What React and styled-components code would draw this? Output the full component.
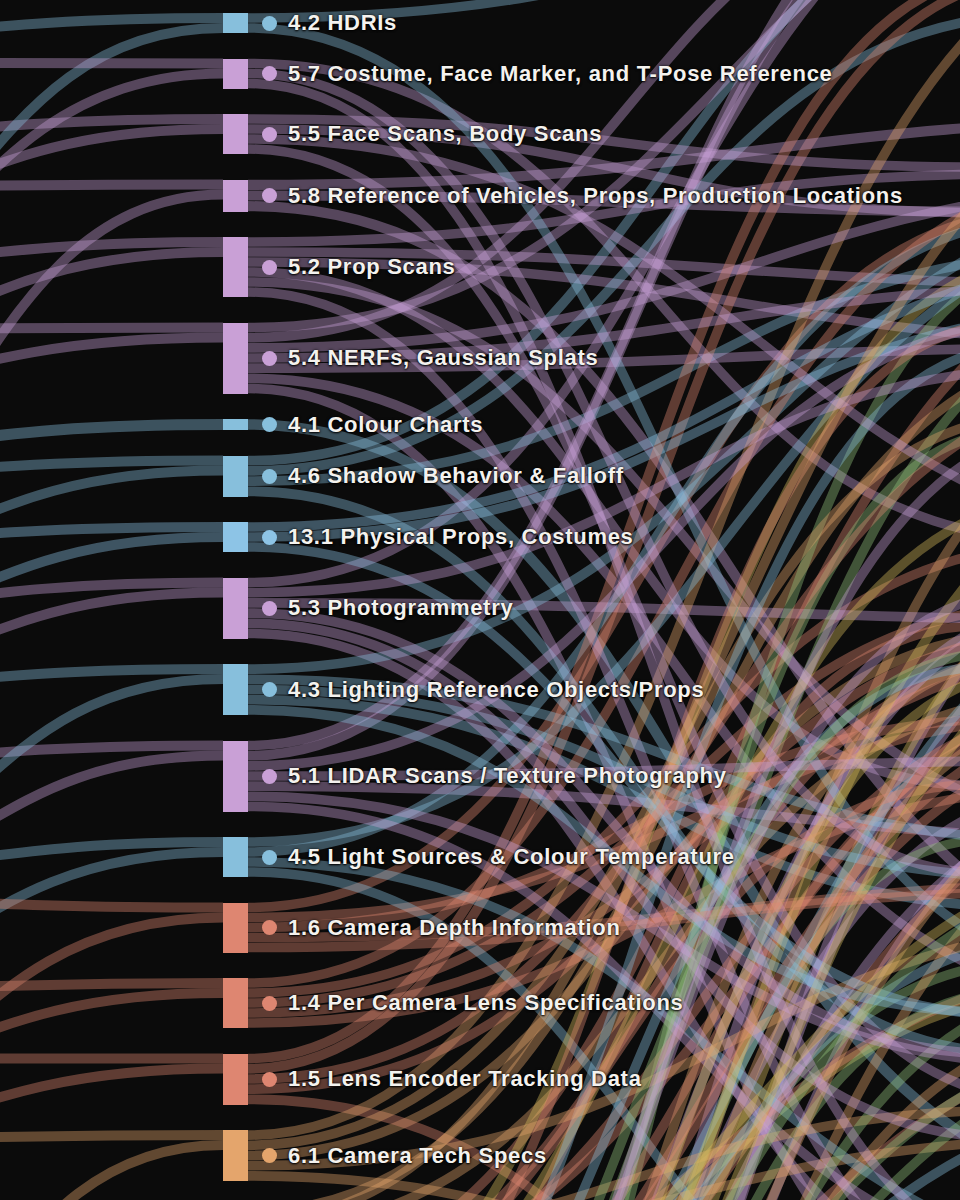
import React from "react";
import styled, { createGlobalStyle } from "styled-components";

const GlobalStyle = createGlobalStyle`
  html, body {
    margin: 0;
    padding: 0;
    background: #0b0b0b;
  }
`;

const BLUE = "#87bfdc";
const LIGHT_BLUE = "#8dc4e6";
const PURPLE = "#c9a0d6";
const SALMON = "#de8671";
const ORANGE = "#e4a56c";
const GREEN = "#93c47d";
const YELLOW = "#d8bb5c";

const NODES = [
  { label: "4.2 HDRIs", h: 20, color: BLUE },
  { label: "5.7 Costume, Face Marker, and T-Pose Reference", h: 30, color: PURPLE },
  { label: "5.5 Face Scans, Body Scans", h: 40, color: PURPLE },
  { label: "5.8 Reference of Vehicles, Props, Production Locations", h: 32, color: PURPLE },
  { label: "5.2 Prop Scans", h: 60, color: PURPLE },
  { label: "5.4 NERFs, Gaussian Splats", h: 71, color: PURPLE },
  { label: "4.1 Colour Charts", h: 11, color: BLUE },
  { label: "4.6 Shadow Behavior & Falloff", h: 41, color: BLUE },
  { label: "13.1 Physical Props, Costumes", h: 30, color: LIGHT_BLUE },
  { label: "5.3 Photogrammetry", h: 61, color: PURPLE },
  { label: "4.3 Lighting Reference Objects/Props", h: 51, color: BLUE },
  { label: "5.1 LIDAR Scans / Texture Photography", h: 71, color: PURPLE },
  { label: "4.5 Light Sources & Colour Temperature", h: 40, color: BLUE },
  { label: "1.6 Camera Depth Information", h: 50, color: SALMON },
  { label: "1.4 Per Camera Lens Specifications", h: 50, color: SALMON },
  { label: "1.5 Lens Encoder Tracking Data", h: 51, color: SALMON },
  { label: "6.1 Camera Tech Specs", h: 51, color: ORANGE },
];

// nodes further down the chart, outside the frame
const HIDDEN = [
  { h: 50, color: ORANGE },
  { h: 60, color: SALMON },
  { h: 40, color: YELLOW },
  { h: 70, color: SALMON },
  { h: 50, color: BLUE },
  { h: 60, color: GREEN },
  { h: 50, color: PURPLE },
  { h: 40, color: YELLOW },
  { h: 60, color: ORANGE },
  { h: 50, color: GREEN },
  { h: 40, color: PURPLE },
];

const TOP = 13;
const GAP = 25.5;
const COL_X = 223;
const BAR_W = 25;

function mulberry32(a) {
  return function () {
    a |= 0;
    a = (a + 0x6d2b79f5) | 0;
    let t = Math.imul(a ^ (a >>> 15), 1 | a);
    t = (t + Math.imul(t ^ (t >>> 7), 61 | t)) ^ t;
    return ((t ^ (t >>> 14)) >>> 0) / 4294967296;
  };
}

const ribbon = (l) => {
  const mx = (l.x0 + l.x1) / 2;
  return `M${l.x0},${l.y0} C${mx},${l.y0} ${mx},${l.y1} ${l.x1},${l.y1}`;
};

function buildLinks() {
  const rand = mulberry32(5);
  const links = [];
  let y = TOP;
  const all = [];
  NODES.forEach((n) => {
    all.push({ ...n, top: y, visible: true });
    y += n.h + GAP;
  });
  HIDDEN.forEach((n) => {
    all.push({ ...n, top: y, visible: false });
    y += n.h + GAP;
  });

  all.forEach((n) => {
    // incoming, from the column off to the left
    if (n.visible) {
      const count = n.h < 15 ? 1 : 2;
      const w = n.h < 15 ? n.h : 10;
      for (let k = 0; k < count; k++) {
        const ly = n.top + w * k + w / 2;
        const sx = -260 - rand() * 160;
        const sy =
          k === 0 ? ly + (rand() * 60 - 15) : ly + 90 + rand() * 360;
        links.push({ x0: sx, y0: sy, x1: COL_X, y1: ly, w, color: n.color });
      }
    }
    // outgoing, to the column off to the right
    const cnt = Math.max(1, Math.round(n.h / 10));
    const w = n.h / cnt;
    const targets = [];
    for (let k = 0; k < cnt; k++) {
      const ty = n.visible ? rand() * 1700 - 250 : rand() * 900 + 250;
      targets.push({ tx: 980 + rand() * 300, ty });
    }
    targets.sort((a, b) => a.ty - b.ty);
    targets.forEach((t, k) => {
      links.push({
        x0: COL_X + BAR_W,
        y0: n.top + w * k + w / 2,
        x1: t.tx,
        y1: t.ty,
        w: w - 0.5,
        color: n.color,
      });
    });
  });

  // shuffle drawing order so crossings mix
  for (let i = links.length - 1; i > 0; i--) {
    const j = Math.floor(rand() * (i + 1));
    [links[i], links[j]] = [links[j], links[i]];
  }
  return links;
}

const LINKS = buildLinks();

const Canvas = styled.div`
  position: relative;
  width: 960px;
  height: 1200px;
  overflow: hidden;
  background: #0b0b0b;
`;

const LinkLayer = styled.svg`
  position: absolute;
  inset: 0;
  width: 960px;
  height: 1200px;
`;

const Ribbon = styled.path`
  fill: none;
  stroke-opacity: 0.4;
`;

const Column = styled.div`
  position: relative;
  display: flex;
  flex-direction: column;
  gap: ${GAP}px;
  padding: ${TOP}px 0 0 ${COL_X}px;
`;

const Row = styled.div`
  display: flex;
  align-items: center;
  height: ${(p) => p.$h}px;
`;

const Bar = styled.div`
  width: ${BAR_W}px;
  align-self: stretch;
  background: ${(p) => p.$color};
`;

const Dot = styled.span`
  width: 15px;
  height: 15px;
  margin-left: 14px;
  border-radius: 50%;
  flex-shrink: 0;
  background: ${(p) => p.$color};
`;

const Label = styled.span`
  margin-left: 11px;
  white-space: nowrap;
  font-family: "Liberation Sans", Arial, sans-serif;
  font-weight: 700;
  font-size: 22px;
  letter-spacing: 0.7px;
  line-height: 26px;
  color: #f4f2ee;
  text-shadow: 0 0 3px rgba(0, 0, 0, 0.85), 0 1px 2px rgba(0, 0, 0, 0.9);
`;

export default function App() {
  return (
    <>
      <GlobalStyle />
      <Canvas>
        <LinkLayer viewBox="0 0 960 1200">
          {LINKS.map((l, i) => (
            <Ribbon key={i} d={ribbon(l)} stroke={l.color} strokeWidth={l.w} />
          ))}
        </LinkLayer>
        <Column>
          {NODES.map((n) => (
            <Row key={n.label} $h={n.h}>
              <Bar $color={n.color} />
              <Dot $color={n.color} />
              <Label>{n.label}</Label>
            </Row>
          ))}
        </Column>
      </Canvas>
    </>
  );
}
